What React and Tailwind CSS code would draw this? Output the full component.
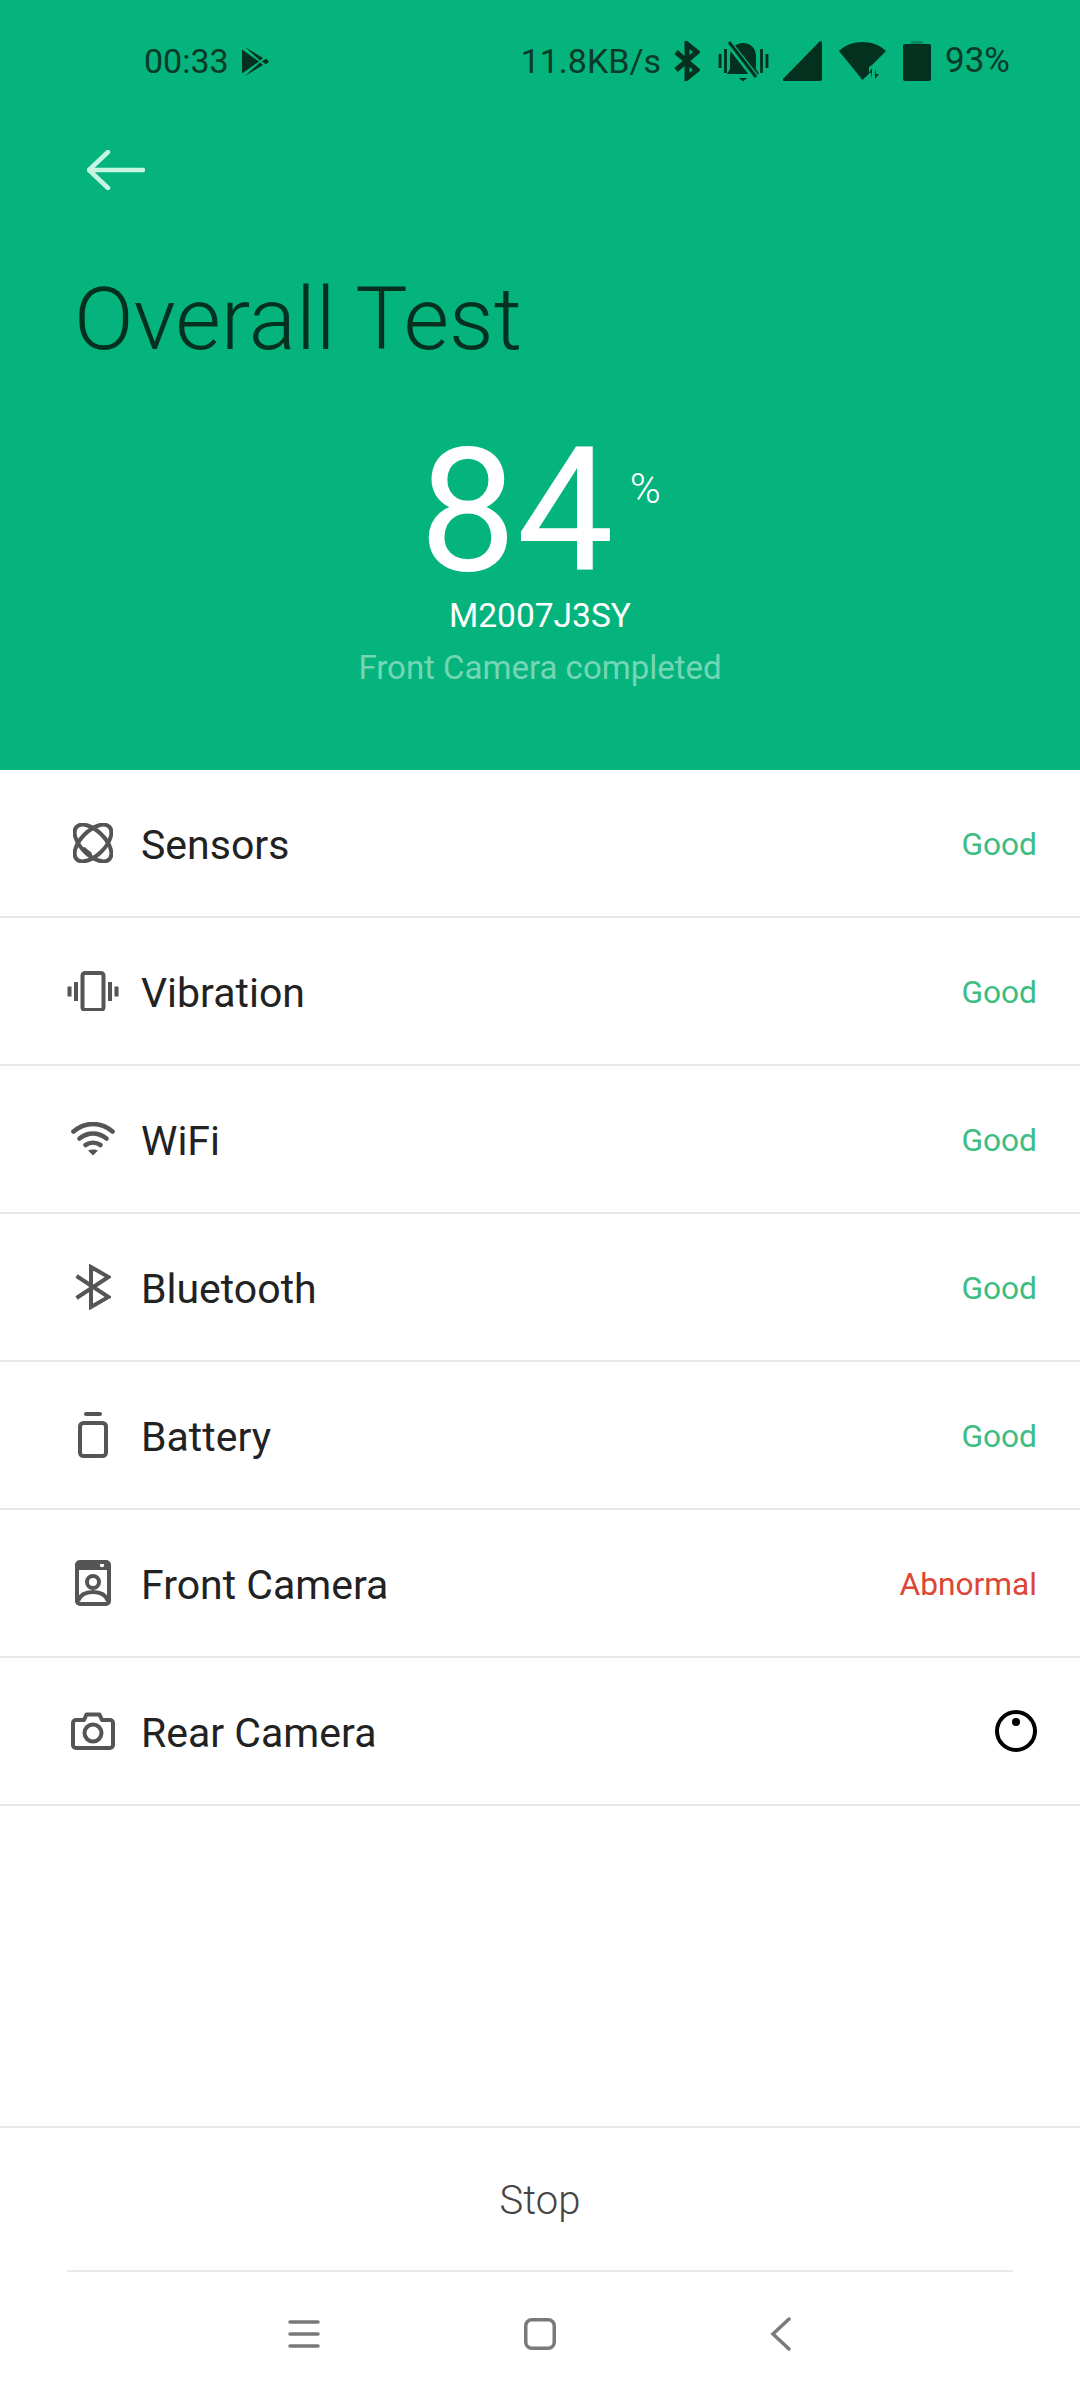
import React from 'react';

const font = { fontFamily: 'Roboto, sans-serif' };

const SensorsIcon = () => (
  <svg viewBox="0 0 40 40" className="w-[40px] h-[40px]" fill="none" stroke="#555" strokeWidth="4" strokeLinecap="round">
    <ellipse cx="20" cy="20" rx="23" ry="12" transform="rotate(45 20 20)" />
    <ellipse cx="20" cy="20" rx="23" ry="12" transform="rotate(-45 20 20)" />
    <path d="M11 26l6 5" />
  </svg>
);

const VibrationIcon = () => (
  <svg viewBox="0 0 52 40" className="w-[52px] h-[40px]" fill="none" stroke="#555" strokeWidth="4">
    <rect x="15.500" y="2" width="21" height="37" rx="2.500" />
    <path d="M2.500 15.500v10M9 11v19M43 11v19M49.500 15.500v10" />
  </svg>
);

const WifiIcon = () => (
  <svg viewBox="0 0 44 34" className="w-[44px] h-[34px]" fill="none" stroke="#555" strokeWidth="4.600" strokeLinecap="round">
    <path d="M2.500 9.500c12-10 27-10 39 0" />
    <path d="M8.500 16.500c8.500-6.500 18.500-6.500 27 0" />
    <path d="M14.500 23c4.500-3 10.500-3 15 0" />
    <path d="M22 33.500l-5-5c2.500-1.500 7.500-1.500 10 0z" fill="#555" stroke="none" />
  </svg>
);

const BluetoothIcon = () => (
  <svg viewBox="0 0 36 46" className="w-[36px] h-[46px]" fill="none" stroke="#555" strokeWidth="4" strokeLinejoin="miter">
    <path d="M1.500 12l32 21L16 43V3l17.500 10L1.500 34" />
  </svg>
);

const BatteryIcon = () => (
  <svg viewBox="0 0 30 46" className="w-[30px] h-[46px]" fill="none" stroke="#555" strokeWidth="4">
    <path d="M8 2h14" strokeLinecap="round" />
    <rect x="2" y="11" width="26" height="33" rx="3.500" />
  </svg>
);

const FrontCameraIcon = () => (
  <svg viewBox="0 0 36 46" className="w-[36px] h-[46px]" fill="none">
    <path d="M4 1h28a3.500 3.500 0 0 1 3.500 3.500V10H.5V4.500A3.500 3.500 0 0 1 4 1z" fill="#555" />
    <circle cx="27" cy="5" r="2.200" fill="#fff" />
    <rect x="2" y="2" width="32" height="42" rx="3" stroke="#555" strokeWidth="4" />
    <circle cx="18" cy="22" r="6" stroke="#555" strokeWidth="4" />
    <path d="M3 41c2-6 8-9 15-9s13 3 15 9" stroke="#555" strokeWidth="4" />
  </svg>
);

const RearCameraIcon = () => (
  <svg viewBox="0 0 44 38" className="w-[44px] h-[38px]" fill="none" stroke="#555" strokeWidth="4" strokeLinejoin="round">
    <path d="M5 8h8l2.500-5.500h13L31 8h8a3 3 0 0 1 3 3v22a3 3 0 0 1-3 3H5a3 3 0 0 1-3-3V11a3 3 0 0 1 3-3z" />
    <circle cx="22" cy="21" r="8.500" />
  </svg>
);

const LoadingDot = () => (
  <svg viewBox="0 0 42 42" className="w-[42px] h-[42px]" fill="none">
    <circle cx="21" cy="21" r="19" stroke="#000" strokeWidth="4" />
    <circle cx="21" cy="12" r="4" fill="#000" />
  </svg>
);

const rows = [
  { name: 'Sensors', status: 'Good', icon: <SensorsIcon /> },
  { name: 'Vibration', status: 'Good', icon: <VibrationIcon /> },
  { name: 'WiFi', status: 'Good', icon: <WifiIcon /> },
  { name: 'Bluetooth', status: 'Good', icon: <BluetoothIcon /> },
  { name: 'Battery', status: 'Good', icon: <BatteryIcon /> },
  { name: 'Front Camera', status: 'Abnormal', icon: <FrontCameraIcon /> },
  { name: 'Rear Camera', status: null, icon: <RearCameraIcon /> },
];

const StatusBar = () => (
  <div className="h-[122px] flex items-center justify-between pl-[144px] pr-[70px] text-[34px] text-[#0a3a28]">
    <div className="flex items-center gap-[13px]">
      <span>00:33</span>
      <svg viewBox="0 0 27 29" className="w-[27px] h-[29px]" fill="#04301f">
        <path d="M0 2.500L17 14.500 0 26.500z" />
        <path d="M3 0l18 11-3 2.500z" />
        <path d="M3 29l18-11-3-2.500z" />
        <path d="M20 14.500l4-3 3 3-3 3z" />
      </svg>
    </div>
    <div className="flex items-center">
      <span className="mr-[13px]">11.8KB/s</span>
      <svg viewBox="0 0 26 40" className="w-[26px] h-[40px] mr-[18px]" fill="none" stroke="#04301f" strokeWidth="5">
        <path d="M2 11l21 18-10 8V3l10 8L2 29" />
      </svg>
      <svg viewBox="0 0 51 42" className="w-[51px] h-[42px] mr-[14px]" fill="none">
        <path d="M25 3c-7 0-13 5-13 13v13l-3 5h32l-3-5V16c0-8-6-13-13-13z" fill="#04301f" />
        <path d="M21 38h8l-4 3.500z" fill="#04301f" />
        <path d="M2 14v14M49 14v14M7.500 9v24M43.500 9v24" stroke="#04301f" strokeWidth="2.800" />
        <path d="M10 2l28 36" stroke="#05b47d" strokeWidth="7" />
        <path d="M11 2l27 35" stroke="#04301f" strokeWidth="3" />
      </svg>
      <svg viewBox="0 0 39 40" className="w-[39px] h-[40px] mr-[17px]" fill="#04301f">
        <path d="M37 0a2 2 0 0 1 2 2v36a2 2 0 0 1-2 2H2a1.500 1.500 0 0 1-1-3z" />
      </svg>
      <svg viewBox="0 0 47 38" className="w-[47px] h-[38px] mr-[17px]" fill="#04301f">
        <path d="M0 9C6 3 15 0 23.500 0S41 3 47 9L33 23l-3 2v7l-6.500 6z" />
        <path d="M33 37V26l-3 5h2zM36 26v11l4-5h-3z" />
      </svg>
      <svg viewBox="0 0 28 40" className="w-[28px] h-[40px] mr-[14px]" fill="#04301f">
        <path d="M8 0h12v3H8z" fillOpacity="0.3" />
        <rect x="0" y="3" width="28" height="37" rx="2" />
      </svg>
      <span className="text-[35px]">93%</span>
    </div>
  </div>
);

export default function App() {
  return (
    <div className="w-[1080px] h-[2400px] bg-white flex flex-col overflow-hidden" style={font}>
      <div className="h-[770px] bg-[#05b47d] shrink-0 flex flex-col">
        <StatusBar />
        <div className="pl-[87px] pt-[28px]">
          <svg viewBox="0 0 58 40" className="w-[58px] h-[40px]" fill="none" stroke="#c8f5e3" strokeWidth="4.500" strokeLinecap="round" strokeLinejoin="round">
            <path d="M21 2L2 20l19 18M2 20h54" />
          </svg>
        </div>
        <h1 className="pl-[74px] mt-[74px] text-[88px] leading-[110px] font-light text-[#04301f]">Overall Test</h1>
        <div className="flex flex-col items-center">
          <div className="flex items-start mt-[53px] text-white">
            <span className="text-[173px] leading-[168px]">84</span>
            <span className="ml-[16px] mt-[38px] text-[42px] leading-[48px] font-light">%</span>
          </div>
          <div className="mt-[1px] text-[33.500px] leading-[40px] text-white">M2007J3SY</div>
          <div className="text-[33px] leading-[40px] text-[#74d6b4] mt-[12px]">Front Camera completed</div>
        </div>
      </div>

      <div className="flex-1 flex flex-col">
        {rows.map((row) => (
          <div key={row.name} className="h-[148px] shrink-0 border-b-2 border-[#e8e8e8] flex items-center pl-[63px] pr-[43px]">
            <div className="w-[60px] flex justify-center shrink-0">{row.icon}</div>
            <div className="ml-[18px] pt-[6px] text-[41px] text-[#222] flex-1">{row.name}</div>
            {row.status ? (
              <div className={row.status === 'Good' ? 'pt-[4px] text-[31.700px] text-[#3dbd83]' : 'pt-[4px] text-[31.700px] text-[#dc4632]'}>{row.status}</div>
            ) : (
              <LoadingDot />
            )}
          </div>
        ))}
      </div>

      <div className="shrink-0 border-t-2 border-[#e8e8e8] h-[274px] flex flex-col">
        <div className="mx-[67px] h-[144px] border-b-2 border-[#e8e8e8] flex items-center justify-center pt-[4px] text-[40px] font-light text-[#444]">Stop</div>
        <div className="flex-1 flex items-center pl-[288px] pb-[4px]">
          <svg viewBox="0 0 32 30" className="w-[32px] h-[30px]" fill="none" stroke="#7a7a7a" strokeWidth="3.500" strokeLinecap="round">
            <path d="M2 3h28M2 15h28M2 27h28" />
          </svg>
          <svg viewBox="0 0 32 32" className="ml-[204px] w-[32px] h-[32px]" fill="none" stroke="#7a7a7a" strokeWidth="3.500">
            <rect x="1.750" y="1.750" width="28.500" height="28.500" rx="6" />
          </svg>
          <svg viewBox="0 0 22 34" className="ml-[213px] w-[22px] h-[34px]" fill="none" stroke="#7a7a7a" strokeWidth="3.500" strokeLinecap="round">
            <path d="M20 2L4 17l16 15" />
          </svg>
        </div>
      </div>
    </div>
  );
}
